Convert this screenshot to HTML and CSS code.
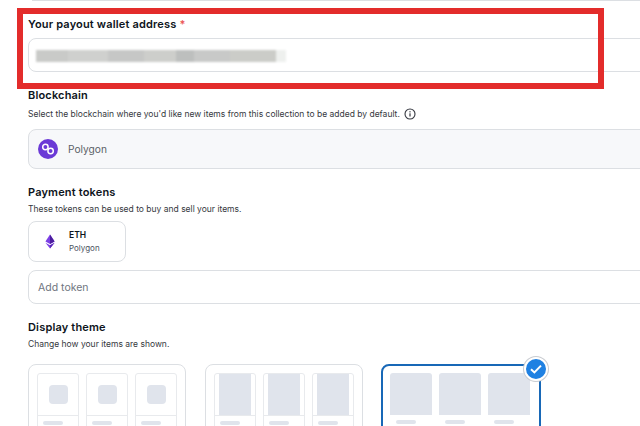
FILE: index.html
```html
<!DOCTYPE html>
<html lang="en">
<head>
    <meta charset="UTF-8">
    <title>Edit collection</title>
    <link rel="stylesheet" href="styles.css">
</head>
<body>

<div class="page">
    <div class="prev-field"></div>

    <label class="field-label wallet-label">Your payout wallet address <span class="required">*</span></label>
    <div class="input-box wallet-input">
        <div class="blurred">
            <i class="b1"></i><i class="b2"></i><i class="b3"></i><i class="b4"></i><i class="b5"></i><i class="b6"></i><i class="b7"></i><i class="b8"></i>
        </div>
    </div>

    <label class="field-label blockchain-label">Blockchain</label>
    <p class="hint hint-info">Select the blockchain where you'd like new items from this collection to be added by default.
        <svg class="info-icon" width="12" height="12" viewBox="0 0 12 12">
            <circle cx="6" cy="6" r="5" fill="none" stroke="#353840" stroke-width="1.1"/>
            <rect x="5.4" y="5.3" width="1.2" height="3.2" fill="#353840"/>
            <rect x="5.4" y="3.2" width="1.2" height="1.2" fill="#353840"/>
        </svg>
    </p>
    <div class="input-box select-box">
        <span class="chain-icon">
            <svg width="20" height="20" viewBox="0 0 20 20">
                <circle cx="7.4" cy="8" r="2.7" fill="none" stroke="#fff" stroke-width="1.5"/>
                <circle cx="12.6" cy="12" r="2.7" fill="none" stroke="#fff" stroke-width="1.5"/>
            </svg>
        </span>
        <span class="select-text">Polygon</span>
    </div>

    <label class="field-label tokens-label">Payment tokens</label>
    <p class="hint hint-tight">These tokens can be used to buy and sell your items.</p>
    <div class="token-card">
        <svg class="eth-icon" width="10" height="15" viewBox="0 0 12 17">
            <path d="M6 0 L11.5 8.6 L6 11.6 L0.5 8.6 Z" fill="#7b3fe4"/>
            <path d="M6 0 L11.5 8.6 L6 11.6 Z" fill="#4c1d9e"/>
            <path d="M0.5 10 L6 13 L11.5 10 L6 17 Z" fill="#7b3fe4"/>
            <path d="M6 13 L11.5 10 L6 17 Z" fill="#5a26b8"/>
        </svg>
        <div class="token-text">
            <div class="token-name">ETH</div>
            <div class="token-chain">Polygon</div>
        </div>
    </div>
    <div class="input-box add-token">Add token</div>

    <label class="field-label theme-label">Display theme</label>
    <p class="hint hint-tight">Change how your items are shown.</p>
    <div class="themes">
        <div class="theme">
            <div class="mini"><div class="mini-top"><span class="thumb"></span></div><div class="mini-foot"><span></span></div></div>
            <div class="mini"><div class="mini-top"><span class="thumb"></span></div><div class="mini-foot"><span></span></div></div>
            <div class="mini"><div class="mini-top"><span class="thumb"></span></div><div class="mini-foot"><span></span></div></div>
        </div>
        <div class="theme theme-contain">
            <div class="mini"><div class="mini-top"><span class="tall"></span></div><div class="mini-foot"><span></span></div></div>
            <div class="mini"><div class="mini-top"><span class="tall"></span></div><div class="mini-foot"><span></span></div></div>
            <div class="mini"><div class="mini-top"><span class="tall"></span></div><div class="mini-foot"><span></span></div></div>
        </div>
        <div class="theme theme-cover">
            <div class="mini"><div class="mini-top"></div><div class="mini-foot"><span></span></div></div>
            <div class="mini"><div class="mini-top"></div><div class="mini-foot"><span></span></div></div>
            <div class="mini"><div class="mini-top"></div><div class="mini-foot"><span></span></div></div>
            <span class="check">
                <svg width="14" height="12" viewBox="0 0 14 12">
                    <path d="M2 6.2 L5.4 9.4 L12 2.6" fill="none" stroke="#fff" stroke-width="2"/>
                </svg>
            </span>
        </div>
    </div>

    <!-- annotation drawn over the screenshot -->
    <div class="red-box"></div>
</div>

</body>
</html>
```

FILE: styles.css
```css
html, body {
    margin: 0;
    height: 426px;
    overflow: hidden;
    background: #ffffff;
}
body {
    font-family: Inter, "Noto Sans", sans-serif;
    color: #04111d;
}
.page {
    position: relative;
    width: 640px;
    height: 426px;
    padding-left: 28px;
    box-sizing: border-box;
    overflow: hidden;
}
.prev-field {
    height: 1px;
    margin: 0 -20px 0 4px;
    background: #dcdfe3;
}
.field-label {
    display: block;
    font-size: 11px;
    line-height: 14px;
    font-weight: 600;
    letter-spacing: 0.17px;
    color: #0d1420;
}
.required {
    color: #eb5757;
}
.wallet-label {
    margin-top: 16px;
}
.blockchain-label {
    margin-top: 16px;
}
.tokens-label {
    margin-top: 16px;
}
.theme-label {
    margin-top: 16px;
}
.hint {
    margin: 0;
    font-size: 8.5px;
    line-height: 12px;
    color: #353840;
}
.hint-info {
    margin-top: 6px;
    display: flex;
    align-items: center;
    gap: 4px;
}
.hint-tight {
    margin-top: 4px;
}
.input-box {
    box-sizing: border-box;
    margin-right: -20px;
    border: 1px solid #dcdfe3;
    border-radius: 8px;
    background: #ffffff;
}
.wallet-input {
    height: 34px;
    margin-top: 7px;
    padding: 11px 7px;
}
.blurred {
    display: flex;
    height: 12px;
    width: 250px;
    filter: blur(1.2px);
}
.blurred i {
    display: block;
    height: 12px;
}
.b1 { width: 32px; background: #c9cac8; }
.b2 { width: 40px; background: #cfd0ce; }
.b3 { width: 36px; background: #c6c7c6; }
.b4 { width: 32px; background: #cdcecb; }
.b5 { width: 18px; background: #bdbfbe; }
.b6 { width: 36px; background: #c8c9c8; }
.b7 { width: 46px; background: #cbccc8; }
.b8 { width: 10px; background: #eef0ee; }
.select-box {
    display: flex;
    align-items: center;
    height: 40px;
    margin-top: 9px;
    padding-left: 9px;
    background: #f7f8fa;
}
.chain-icon {
    display: flex;
    align-items: center;
    justify-content: center;
    width: 20px;
    height: 20px;
    border-radius: 50%;
    background: #6b3ad6;
}
.select-text {
    margin-left: 10px;
    font-size: 10.2px;
    color: #5a5f66;
}
.token-card {
    box-sizing: border-box;
    display: flex;
    align-items: center;
    width: 98px;
    height: 41px;
    margin-top: 6px;
    border: 1px solid #dcdfe3;
    border-radius: 8px;
    padding-left: 16px;
}
.token-text {
    margin-left: 14px;
}
.token-name {
    font-size: 8.5px;
    line-height: 13px;
    font-weight: 600;
    color: #0d1420;
}
.token-chain {
    font-size: 8px;
    line-height: 12px;
    color: #4b5360;
}
.add-token {
    display: flex;
    align-items: center;
    height: 34px;
    margin-top: 8px;
    padding-left: 9px;
    font-size: 10.5px;
    color: #6f7580;
}
.themes {
    display: flex;
    gap: 19px;
    margin-top: 14px;
}
.theme {
    position: relative;
    box-sizing: border-box;
    display: flex;
    gap: 7px;
    width: 158px;
    height: 100px;
    padding: 8px;
    border: 1px solid #dcdfe3;
    border-radius: 8px;
}
.mini {
    box-sizing: border-box;
    width: 42px;
    height: 70px;
    border: 1px solid #e8eaed;
    border-radius: 3px;
}
.mini-top {
    display: flex;
    align-items: center;
    justify-content: center;
    height: 42px;
    box-sizing: border-box;
    border-bottom: 1px solid #e8eaed;
}
.thumb {
    width: 19px;
    height: 19px;
    border-radius: 4px;
    background: #e0e4ec;
}
.tall {
    width: 32px;
    height: 100%;
    background: #e0e4ec;
}
.mini-foot span {
    display: block;
    width: 20px;
    height: 4px;
    margin: 5px 0 0 5px;
    border-radius: 2px;
    background: #e0e4ec;
}
.theme-cover {
    border: 2px solid #1868b7;
    padding: 7px;
    width: 160px;
    margin-left: -1px;
}
.theme-cover .mini {
    border: 0;
}
.theme-cover .mini-foot span {
    margin-left: 6px;
}
.theme-cover .mini-top {
    background: #e0e4ec;
    border-radius: 3px 3px 0 0;
    border: 0;
}
.check {
    position: absolute;
    top: -9px;
    right: -9px;
    display: flex;
    align-items: center;
    justify-content: center;
    box-sizing: border-box;
    width: 24px;
    height: 24px;
    border-radius: 50%;
    background: #2081e2;
    border: 2px solid #ffffff;
    box-shadow: 0 0 0 1px #c9ccd1;
}
.red-box {
    position: absolute;
    left: 17px;
    top: 8px;
    width: 587px;
    height: 81px;
    box-sizing: border-box;
    border: 6px solid #e32c2b;
}
```
